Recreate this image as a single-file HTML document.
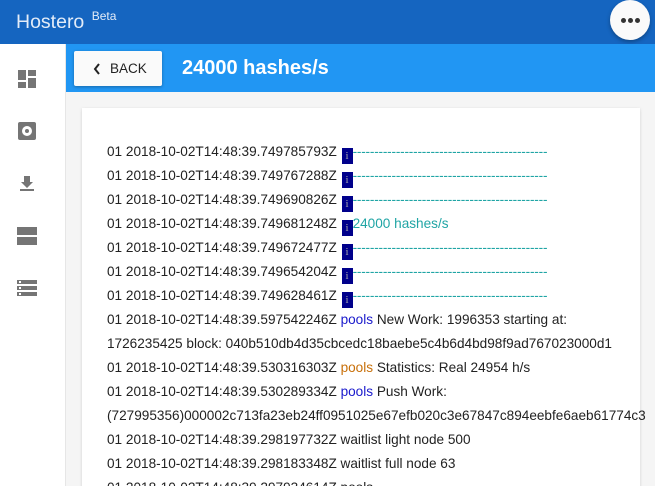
<!DOCTYPE html>
<html><head><meta charset="utf-8"><style>
*{margin:0;padding:0;box-sizing:border-box}
html,body{width:655px;height:486px;overflow:hidden}
body{background:#f5f5f5;font-family:"Liberation Sans",sans-serif;position:relative}
.top{position:absolute;left:0;top:0;width:655px;height:44px;background:#1565c0;color:#e3ecf8}
.top .t{position:absolute;left:16px;top:11px;font-size:19.5px}
.top .t sup{font-size:12px;vertical-align:0;position:relative;top:-8px;margin-left:2px}
.dots{position:absolute;left:610px;top:0;width:40px;height:40px;border-radius:50%;background:#fafafa;box-shadow:0 2px 4px rgba(0,0,0,.3)}
.dots i{position:absolute;top:18px;width:5px;height:5px;border-radius:50%;background:#333}
.side{position:absolute;left:0;top:44px;width:66px;height:442px;background:#fff;border-right:1px solid #e6e6e6}
.sub{position:absolute;left:66px;top:44px;width:589px;height:48px;background:#2196f3}
.back{position:absolute;left:74px;top:51px;width:88px;height:35px;background:#fafafa;border-radius:2px;box-shadow:0 1px 3px rgba(0,0,0,.3);font-size:13.5px;color:#222}
.back span{position:absolute;left:36px;top:10px}
.title{position:absolute;left:182px;top:57px;color:#fff;font-weight:bold;font-size:20px}
.card{position:absolute;left:82px;top:108px;width:558px;height:400px;background:#fff;box-shadow:0 1px 3px rgba(0,0,0,.15)}
.log{position:absolute;left:107px;top:140px;font-size:13.6px;line-height:24px;color:#222;white-space:nowrap}
.i{display:inline-block;width:11px;height:16px;background:#00008b;color:#aaa;font-family:"Liberation Serif",serif;font-size:11px;line-height:16px;text-align:center;vertical-align:-3px;margin-left:1px}
.d{color:#20a5a5;letter-spacing:-.2px}
.b{color:#1a1acc}.o{color:#c8700a}
</style></head><body>
<div class="top"><div class="t">Hostero <sup>Beta</sup></div>
<div class="dots"><i style="left:11px"></i><i style="left:18px"></i><i style="left:25px"></i></div></div>
<div class="side">
<svg style="position:absolute;left:18px;top:26px" width="18" height="18" viewBox="0 0 18 18" fill="#757575"><rect x="0" y="0" width="8" height="10"/><rect x="10" y="0" width="8" height="6"/><rect x="0" y="12" width="8" height="6"/><rect x="10" y="8" width="8" height="10"/></svg>
<svg style="position:absolute;left:18px;top:78px" width="18" height="18" viewBox="0 0 18 18"><rect width="18" height="18" rx="2" fill="#757575"/><circle cx="9" cy="9" r="5" fill="#fff"/><circle cx="9" cy="9" r="2" fill="#757575"/></svg>
<svg style="position:absolute;left:18px;top:130px" width="18" height="18" viewBox="0 0 18 18" fill="#757575"><path d="M6 2h6v6h3l-6 6-6-6h3z"/><rect x="2" y="15" width="14" height="2"/></svg>
<svg style="position:absolute;left:17px;top:183px" width="20" height="19" viewBox="0 0 20 19" fill="#757575"><rect width="20" height="8"/><rect y="10" width="20" height="8"/></svg>
<svg style="position:absolute;left:17px;top:236px" width="20" height="16" viewBox="0 0 20 16" fill="#757575"><rect width="20" height="4"/><rect y="6" width="20" height="4"/><rect y="12" width="20" height="4"/><rect x="2" y="1" width="2" height="2" fill="#fff"/><rect x="2" y="7" width="2" height="2" fill="#fff"/><rect x="2" y="13" width="2" height="2" fill="#fff"/></svg>
</div>
<div class="sub"></div>
<div class="back"><svg style="position:absolute;left:19px;top:12px" width="8" height="12" viewBox="0 0 8 12"><path d="M6 1L2 6l4 5" stroke="#222" stroke-width="2" fill="none"/></svg><span>BACK</span></div>
<div class="title">24000 hashes/s</div>
<div class="card"></div>
<div class="log">
01 2018-10-02T14:48:39.749785793Z <span class="i">i</span><span class="d">---------------------------------------------</span><br>
01 2018-10-02T14:48:39.749767288Z <span class="i">i</span><span class="d">---------------------------------------------</span><br>
01 2018-10-02T14:48:39.749690826Z <span class="i">i</span><span class="d">---------------------------------------------</span><br>
01 2018-10-02T14:48:39.749681248Z <span class="i">i</span><span class="d" style="letter-spacing:0">24000 hashes/s</span><br>
01 2018-10-02T14:48:39.749672477Z <span class="i">i</span><span class="d">---------------------------------------------</span><br>
01 2018-10-02T14:48:39.749654204Z <span class="i">i</span><span class="d">---------------------------------------------</span><br>
01 2018-10-02T14:48:39.749628461Z <span class="i">i</span><span class="d">---------------------------------------------</span><br>
01 2018-10-02T14:48:39.597542246Z <span class="b">pools</span> New Work: 1996353 starting at:<br>
1726235425 block: 040b510db4d35cbcedc18baebe5c4b6d4bd98f9ad767023000d1<br>
01 2018-10-02T14:48:39.530316303Z <span class="o">pools</span> Statistics: Real 24954 h/s<br>
01 2018-10-02T14:48:39.530289334Z <span class="b">pools</span> Push Work:<br>
(727995356)000002c713fa23eb24ff0951025e67efb020c3e67847c894eebfe6aeb61774c3<br>
01 2018-10-02T14:48:39.298197732Z waitlist light node 500<br>
01 2018-10-02T14:48:39.298183348Z waitlist full node 63<br>
01 2018-10-02T14:48:39.297934614Z pools
</div>
</body></html>
